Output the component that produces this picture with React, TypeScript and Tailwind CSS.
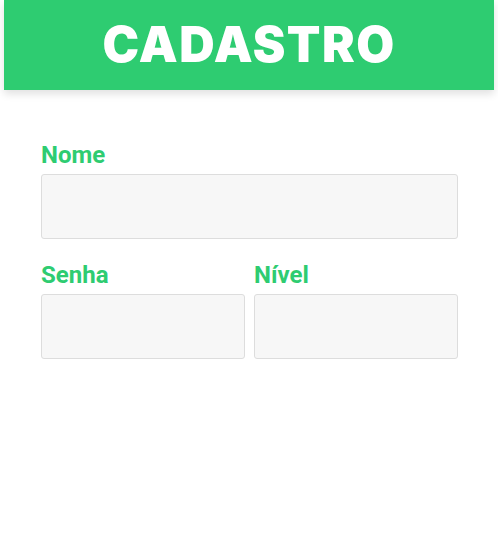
export default function App() {
  return (
    <div className="min-h-[560px] bg-white" style={{ fontFamily: 'Roboto, "Liberation Sans", sans-serif' }}>
      <header className="mx-1 flex h-[90px] items-center justify-center bg-[#2ecc71] shadow-[0_4px_8px_rgba(0,0,0,0.12)]">
        <h1 className="font-['Inter',sans-serif] text-[49px] font-black tracking-[0.03em] text-white">CADASTRO</h1>
      </header>

      <form className="flex flex-col gap-[22px] pl-[41px] pr-[40px] pt-[51px]">
        <div className="flex flex-col gap-[4px]">
          <label className="text-[24px] font-bold leading-[29px] text-[#2ecc71]">Nome</label>
          <input className="h-[65px] w-full rounded-[3px] border border-[#dddddd] bg-[#f7f7f7] outline-none" />
        </div>

        <div className="grid grid-cols-2 gap-[9px]">
          <div className="flex flex-col gap-[4px]">
            <label className="text-[24px] font-bold leading-[29px] text-[#2ecc71]">Senha</label>
            <input type="password" className="h-[65px] w-full rounded-[3px] border border-[#dddddd] bg-[#f7f7f7] outline-none" />
          </div>
          <div className="flex flex-col gap-[4px]">
            <label className="text-[24px] font-bold leading-[29px] text-[#2ecc71]">Nível</label>
            <input className="h-[65px] w-full rounded-[3px] border border-[#dddddd] bg-[#f7f7f7] outline-none" />
          </div>
        </div>
      </form>
    </div>
  )
}
